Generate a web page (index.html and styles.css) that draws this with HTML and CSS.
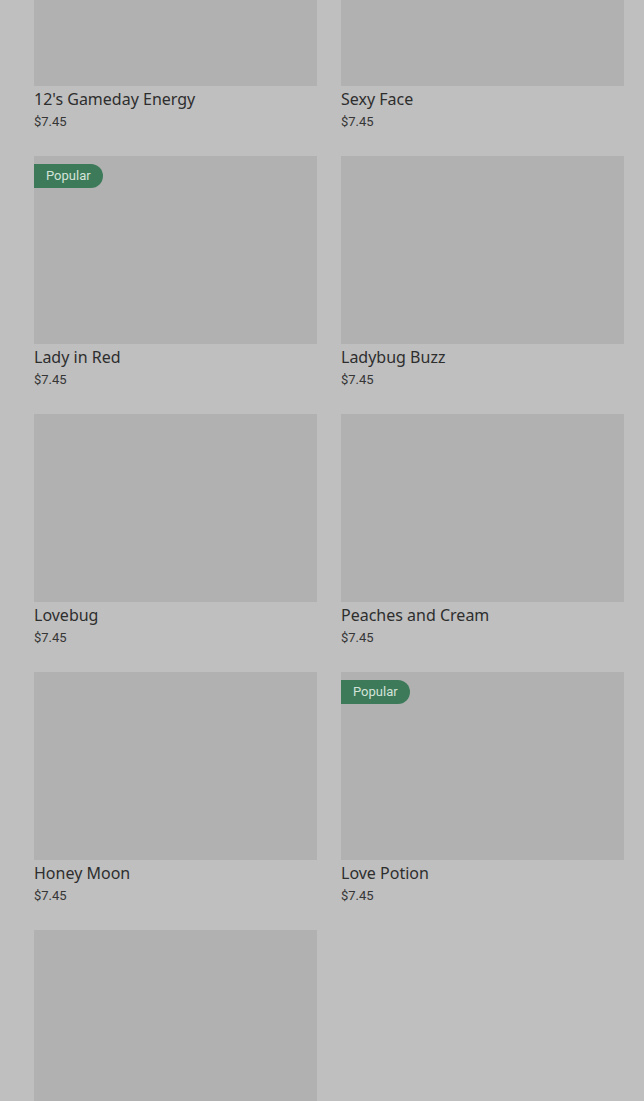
FILE: index.html
```html
<!DOCTYPE html>
<html>
<head>
<meta charset="utf-8">
<link rel="stylesheet" href="styles.css">
</head>
<body>
<div class="grid">
  <div class="card"><div class="img"></div><div class="title">12's Gameday Energy</div><div class="price">$7.45</div></div>
  <div class="card"><div class="img"></div><div class="title">Sexy Face</div><div class="price">$7.45</div></div>
  <div class="card"><div class="img"><span class="badge">Popular</span></div><div class="title">Lady in Red</div><div class="price">$7.45</div></div>
  <div class="card"><div class="img"></div><div class="title">Ladybug Buzz</div><div class="price">$7.45</div></div>
  <div class="card"><div class="img"></div><div class="title">Lovebug</div><div class="price">$7.45</div></div>
  <div class="card"><div class="img"></div><div class="title">Peaches and Cream</div><div class="price">$7.45</div></div>
  <div class="card"><div class="img"></div><div class="title">Honey Moon</div><div class="price">$7.45</div></div>
  <div class="card"><div class="img"><span class="badge">Popular</span></div><div class="title">Love Potion</div><div class="price">$7.45</div></div>
  <div class="card"><div class="img"></div></div>
</div>
</body>
</html>
```
FILE: styles.css
```css
html, body {
  margin: 0;
  padding: 0;
  background: #bfbfbf;
  overflow: hidden;
  height: 1101px;
}
body {
  font-family: "Noto Sans", Roboto, sans-serif;
  color: #333333;
}
.grid {
  display: grid;
  grid-template-columns: 283px 283px;
  column-gap: 24px;
  row-gap: 24px;
  padding: 0 20px 0 34px;
  margin-top: -102px;
}
.img {
  position: relative;
  height: 188px;
  background: #b1b1b1;
}
.title {
  margin-top: 2px;
  font-size: 16px;
  line-height: 22px;
  font-weight: 400;
  color: #2e2e2e;
}
.price {
  margin-top: 1px;
  font-family: Roboto, "Noto Sans", sans-serif;
  font-size: 13px;
  line-height: 21px;
  color: #363636;
}
.badge {
  position: absolute;
  top: 8px;
  left: 0;
  height: 24px;
  line-height: 24px;
  padding: 0 12px 0 12px;
  font-family: Roboto, "Noto Sans", sans-serif;
  font-size: 13px;
  color: #d3e3d8;
  background: #3d7a5a;
  border-radius: 0 12px 12px 0;
}
```
